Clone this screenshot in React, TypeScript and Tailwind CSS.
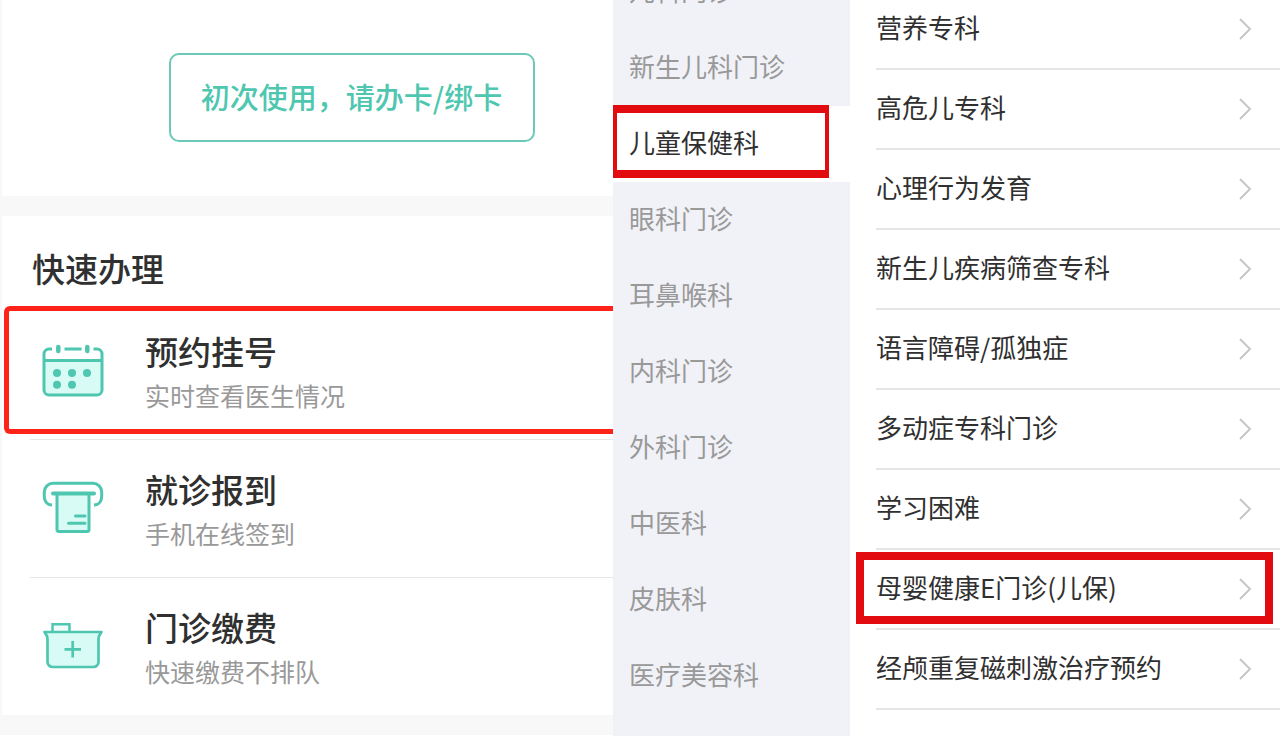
// Hospital appointment guide: home services, department list and clinic list side by side.
import type { ReactNode } from 'react';

interface Service {
  title: string;
  note: string;
  icon: ReactNode;
  marked?: boolean;
}

interface Entry {
  name: string;
  marked?: boolean;
}

const iconProps = {
  viewBox: '0 0 64 64',
  fill: 'none',
  stroke: '#4fc7b0',
  strokeWidth: 3,
  strokeLinecap: 'round' as const,
  strokeLinejoin: 'round' as const,
  className: 'size-16 shrink-0',
  'aria-hidden': true,
};

function CalendarIcon() {
  return (
    <svg {...iconProps}>
      <path d="M3 21.5H61V51a5 5 0 0 1-5 5H8a5 5 0 0 1-5-5Z" fill="#d9fbf6" stroke="none" />
      <path
        d="M11 10H8a5 5 0 0 0-5 5V51a5 5 0 0 0 5 5H56a5 5 0 0 0 5-5V15a5 5 0 0 0-5-5H52.5M23.5 10H40.5M3 21.5H61"
        strokeLinecap="butt"
      />
      <path d="M17.3 8V12M46.3 8V12" strokeWidth="4.5" />
      <g fill="#4fc7b0" stroke="none">
        <circle cx="16" cy="34" r="4" />
        <circle cx="31" cy="34" r="4" />
        <circle cx="46" cy="34" r="4" />
        <circle cx="16" cy="45.7" r="4" />
        <circle cx="31" cy="45.7" r="4" />
      </g>
    </svg>
  );
}

function TicketIcon() {
  return (
    <svg {...iconProps}>
      <path
        d="M11 28C5 28 3.3 23 3.3 19V15a8.7 8.7 0 0 1 8.7-8.7H52a8.7 8.7 0 0 1 8.7 8.7V19C60.7 23 59 28 53 28"
        strokeLinecap="butt"
      />
      <path d="M16 16.5H48V52.5a2 2 0 0 1-2 2H18a2 2 0 0 1-2-2Z" fill="#d9fbf6" />
      <path d="M12 16.5H53" strokeWidth="4" />
      <path d="M34.5 39H44M27.5 46.3H44" />
    </svg>
  );
}

function CashBoxIcon() {
  return (
    <svg {...iconProps} strokeLinecap="butt">
      <path d="M11.5 17V9.3H28.5V17" fill="#effdfb" strokeWidth="2.5" strokeLinejoin="miter" />
      <path
        d="M3.5 17H60.5C59 19.5 57.5 20.5 57.5 24V47a5 5 0 0 1-5 5H11.5a5 5 0 0 1-5-5V24C6.5 20.5 5 19.5 3.5 17Z"
        fill="#d9fbf6"
        strokeWidth="2.7"
      />
      <path d="M23.5 34.3H40M31.7 26V42.6" strokeWidth="2.7" />
    </svg>
  );
}

function ChevronIcon() {
  return (
    <svg viewBox="0 0 14 24" className="h-6 w-3.5 shrink-0" fill="none" stroke="#c4c4c4" strokeWidth="1.8" aria-hidden>
      <path d="M2 2L12 12L2 22" />
    </svg>
  );
}

const services: Service[] = [
  { title: '预约挂号', note: '实时查看医生情况', icon: <CalendarIcon />, marked: true },
  { title: '就诊报到', note: '手机在线签到', icon: <TicketIcon /> },
  { title: '门诊缴费', note: '快速缴费不排队', icon: <CashBoxIcon /> },
];

const departments: Entry[] = [
  { name: '儿科门诊' },
  { name: '新生儿科门诊' },
  { name: '儿童保健科', marked: true },
  { name: '眼科门诊' },
  { name: '耳鼻喉科' },
  { name: '内科门诊' },
  { name: '外科门诊' },
  { name: '中医科' },
  { name: '皮肤科' },
  { name: '医疗美容科' },
];

const clinics: Entry[] = [
  { name: '营养专科' },
  { name: '高危儿专科' },
  { name: '心理行为发育' },
  { name: '新生儿疾病筛查专科' },
  { name: '语言障碍/孤独症' },
  { name: '多动症专科门诊' },
  { name: '学习困难' },
  { name: '母婴健康E门诊(儿保)', marked: true },
  { name: '经颅重复磁刺激治疗预约' },
];

function ServicePanel() {
  return (
    <section className="bg-white">
      <div className="flex flex-col gap-5 bg-[#f8f8f8] pb-5 pl-0.5">
        <div className="flex justify-center bg-white pt-[53px] pb-[54px] pl-[88px]">
          <button
            type="button"
            className="h-[89px] w-[366px] rounded-[10px] border-2 border-[#6cc9ba] pb-1 text-[29px] leading-10 font-medium text-[#4fc7b0]"
          >
            初次使用，请办卡/绑卡
          </button>
        </div>
        <div className="bg-white pt-7">
          <h2 className="mb-2.5 pl-[30px] text-[33px] leading-12 font-medium text-[#303030]">快速办理</h2>
          <ul>
            {services.map((service) => (
              <li key={service.title} className="group relative">
                <a href="#" className="flex h-[137px] items-center gap-10 pl-[39px]">
                  {service.icon}
                  <span className="flex flex-col">
                    <span className="text-[33px] leading-12 font-medium text-[#303030]">{service.title}</span>
                    <span className="text-[25px] leading-10 text-[#999]">{service.note}</span>
                  </span>
                </a>
                <div className="ml-7 h-px bg-[#e6e6e6] group-last:hidden" />
                {service.marked && (
                  <div className="pointer-events-none absolute top-1 right-0 bottom-1.5 left-0.5 rounded-l-md border-5 border-r-0 border-[#fd2318]" />
                )}
              </li>
            ))}
          </ul>
        </div>
      </div>
    </section>
  );
}

function DepartmentPanel() {
  return (
    <nav className="overflow-hidden bg-[#f1f2f7]">
      <ul className="-mt-[46px]">
        {departments.map(({ name, marked }) => (
          <li key={name} className="relative">
            <button
              type="button"
              className={`h-[76px] w-full pb-1 pl-4 text-left text-[26px] leading-10 ${
                marked ? 'bg-white text-[#303030]' : 'text-[#999]'
              }`}
            >
              {name}
            </button>
            {marked && (
              <div className="pointer-events-none absolute -top-px right-[21px] bottom-1 left-0 border-x-4 border-y-8 border-[#e20c10]" />
            )}
          </li>
        ))}
      </ul>
    </nav>
  );
}

function ClinicPanel() {
  return (
    <section className="bg-white pl-[26px]">
      <ul className="-mt-[10px]">
        {clinics.map(({ name, marked }) => (
          <li key={name} className="relative border-b-2 border-[#e6e6e6]">
            <a
              href="#"
              className="flex h-[78px] items-center justify-between pr-7 text-[26px] leading-10 text-[#303030]"
            >
              <span className="pb-1">{name}</span>
              <ChevronIcon />
            </a>
            {marked && (
              <div className="pointer-events-none absolute top-0.5 right-[7px] bottom-1 -left-5 border-8 border-[#e20c10]" />
            )}
          </li>
        ))}
      </ul>
    </section>
  );
}

export default function App() {
  return (
    <main className="grid min-h-screen grid-cols-[613fr_237fr_430fr] overflow-hidden bg-white font-['Noto_Sans_CJK_SC',sans-serif]">
      <ServicePanel />
      <DepartmentPanel />
      <ClinicPanel />
    </main>
  );
}
